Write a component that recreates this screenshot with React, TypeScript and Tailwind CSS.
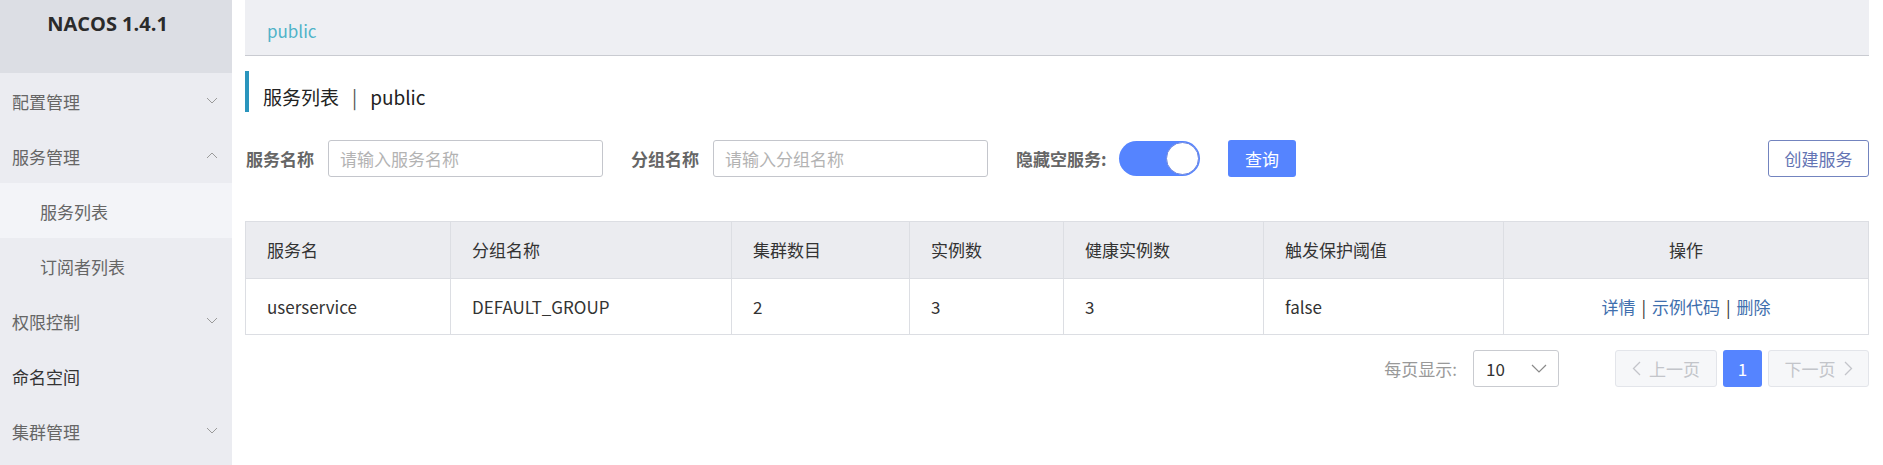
import React from "react";

const Chevron = ({ up = false }: { up?: boolean }) => (
  <svg width="12" height="7" viewBox="0 0 12 7" className="shrink-0">
    <polyline
      points={up ? "1,6 6,1 11,6" : "1,1 6,6 11,1"}
      fill="none"
      stroke="#9a9a9a"
      strokeWidth="1"
    />
  </svg>
);

const menu: { label: string; sub?: boolean; chevron?: "up" | "down"; active?: boolean; dark?: boolean }[] = [
  { label: "配置管理", chevron: "down" },
  { label: "服务管理", chevron: "up" },
  { label: "服务列表", sub: true, active: true },
  { label: "订阅者列表", sub: true },
  { label: "权限控制", chevron: "down" },
  { label: "命名空间", dark: true },
  { label: "集群管理", chevron: "down" },
];

const cols = [
  { title: "服务名", w: "w-[205px]", v: "userservice" },
  { title: "分组名称", w: "w-[281px]", v: "DEFAULT_GROUP" },
  { title: "集群数目", w: "w-[178px]", v: "2" },
  { title: "实例数", w: "w-[154px]", v: "3" },
  { title: "健康实例数", w: "w-[200px]", v: "3" },
  { title: "触发保护阈值", w: "w-[240px]", v: "false" },
];

export default function App() {
  return (
    <div className="flex w-[1883px] h-[465px] overflow-hidden bg-white font-['Noto_Sans_CJK_SC',sans-serif] text-[17px] text-[#333]">
      {/* Sidebar */}
      <aside className="w-[232px] shrink-0 bg-[#ebecf1] flex flex-col">
        <div className="h-[73px] bg-[#dcdee4] flex justify-center pr-[17px] pt-[10px]">
          <span className="font-['Open_Sans',sans-serif] font-bold text-[20px] leading-[28px] text-[#2b2b2b]">
            NACOS 1.4.1
          </span>
        </div>
        {menu.map((m) => (
          <div
            key={m.label}
            className={`h-[55px] flex items-center justify-between pr-[14px] ${m.sub ? "pl-[40px]" : "pl-[12px]"} ${m.active ? "bg-[#f3f4f8]" : ""}`}
          >
            <span className={`leading-none pt-[2px] ${m.dark ? "text-[#333]" : "text-[#666]"}`}>{m.label}</span>
            {m.chevron && <Chevron up={m.chevron === "up"} />}
          </div>
        ))}
      </aside>

      {/* Main */}
      <main className="flex-1 pl-[13px] pr-[14px] flex flex-col">
        <div className="h-[56px] bg-[#eeeff3] border-b border-[#c9cbd1] flex items-center pl-[22px]">
          <span className="text-[#4fb3c8] leading-none pt-[6px]">public</span>
        </div>

        <div className="mt-[15px] h-[41px] border-l-[4px] border-[#2a95bd] flex items-center pl-[14px] pt-[9px] text-[19px] leading-none text-[#222]">
          <span>服务列表</span>
          <span className="mx-[13px] text-[#555]">|</span>
          <span>public</span>
        </div>

        <div className="mt-[28px] flex items-center h-[37px]">
          <div className="w-[83px] pl-[1px] shrink-0">
            <span className="font-bold text-[#666] leading-none whitespace-nowrap">服务名称</span>
          </div>
          <input
            className="w-[275px] shrink-0 h-[37px] border border-[#c4c6cc] rounded-[3px] px-[11px] text-[17px] outline-none placeholder:text-[#b3b3b3]"
            placeholder="请输入服务名称"
          />
          <div className="w-[110px] pl-[28px] shrink-0">
            <span className="font-bold text-[#666] leading-none whitespace-nowrap">分组名称</span>
          </div>
          <input
            className="w-[275px] shrink-0 h-[37px] border border-[#c4c6cc] rounded-[3px] px-[11px] text-[17px] outline-none placeholder:text-[#b3b3b3]"
            placeholder="请输入分组名称"
          />
          <div className="w-[131px] pl-[28px] shrink-0">
            <span className="font-bold text-[#666] leading-none whitespace-nowrap">隐藏空服务:</span>
          </div>
          <div className="w-[81px] shrink-0 h-[35px] rounded-full bg-[#5584ff] flex items-center justify-end pr-[1px]">
            <div className="w-[33px] h-[33px] rounded-full bg-white border border-[#6d86e0]" />
          </div>
          <button className="ml-[28px] w-[68px] h-[37px] rounded-[3px] bg-[#5584ff] text-white leading-none">
            查询
          </button>
          <button className="ml-auto w-[101px] h-[37px] rounded-[3px] border border-[#7384bf] text-[#6474b4] bg-white leading-none">
            创建服务
          </button>
        </div>

        <table className="mt-[44px] w-full table-fixed border-collapse border border-[#dcdee3]">
          <colgroup>
            {cols.map((c) => (
              <col key={c.title} className={c.w} />
            ))}
            <col />
          </colgroup>
          <thead>
            <tr className="h-[57px] bg-[#ebecf0]">
              {cols.map((c) => (
                <th key={c.title} className="border border-[#dcdee3] text-left font-normal px-[21px] text-[#333]">
                  {c.title}
                </th>
              ))}
              <th className="border border-[#dcdee3] text-center font-normal text-[#333]">操作</th>
            </tr>
          </thead>
          <tbody>
            <tr className="h-[56px] bg-white">
              {cols.map((c) => (
                <td key={c.title} className="border border-[#dcdee3] px-[21px] text-[#333]">
                  {c.v}
                </td>
              ))}
              <td className="border border-[#dcdee3] text-center">
                <span className="text-[#3f6fae]">详情</span>
                <span className="mx-[6px] text-[#333]">|</span>
                <span className="text-[#3f6fae]">示例代码</span>
                <span className="mx-[6px] text-[#333]">|</span>
                <span className="text-[#3f6fae]">删除</span>
              </td>
            </tr>
          </tbody>
        </table>

        <div className="mt-[15px] flex items-center justify-end h-[37px]">
          <span className="text-[#999] leading-none">每页显示:</span>
          <div className="ml-[16px] w-[86px] h-[37px] border border-[#c9cbd0] rounded-[3px] flex items-center justify-between pl-[12px] pr-[11px]">
            <span className="leading-none text-[#333]">10</span>
            <svg width="16" height="9" viewBox="0 0 16 9">
              <polyline points="1,1 8,8 15,1" fill="none" stroke="#8a8a8a" strokeWidth="1.2" />
            </svg>
          </div>
          <div className="ml-[56px] w-[102px] h-[37px] border border-[#e3e5ea] bg-[#f6f7f9] rounded-[3px] flex items-center justify-center gap-[8px] text-[#c3c5ca]">
            <svg width="9" height="15" viewBox="0 0 9 15">
              <polyline points="8,1 1.5,7.5 8,14" fill="none" stroke="#c3c5ca" strokeWidth="1.3" />
            </svg>
            <span className="leading-none">上一页</span>
          </div>
          <div className="ml-[6px] w-[39px] h-[37px] rounded-[3px] bg-[#5584ff] text-white flex items-center justify-center leading-none">
            1
          </div>
          <div className="ml-[6px] w-[101px] h-[37px] border border-[#e3e5ea] bg-[#f6f7f9] rounded-[3px] flex items-center justify-center gap-[8px] text-[#c3c5ca]">
            <span className="leading-none">下一页</span>
            <svg width="9" height="15" viewBox="0 0 9 15">
              <polyline points="1,1 7.5,7.5 1,14" fill="none" stroke="#c3c5ca" strokeWidth="1.3" />
            </svg>
          </div>
        </div>
      </main>
    </div>
  );
}
